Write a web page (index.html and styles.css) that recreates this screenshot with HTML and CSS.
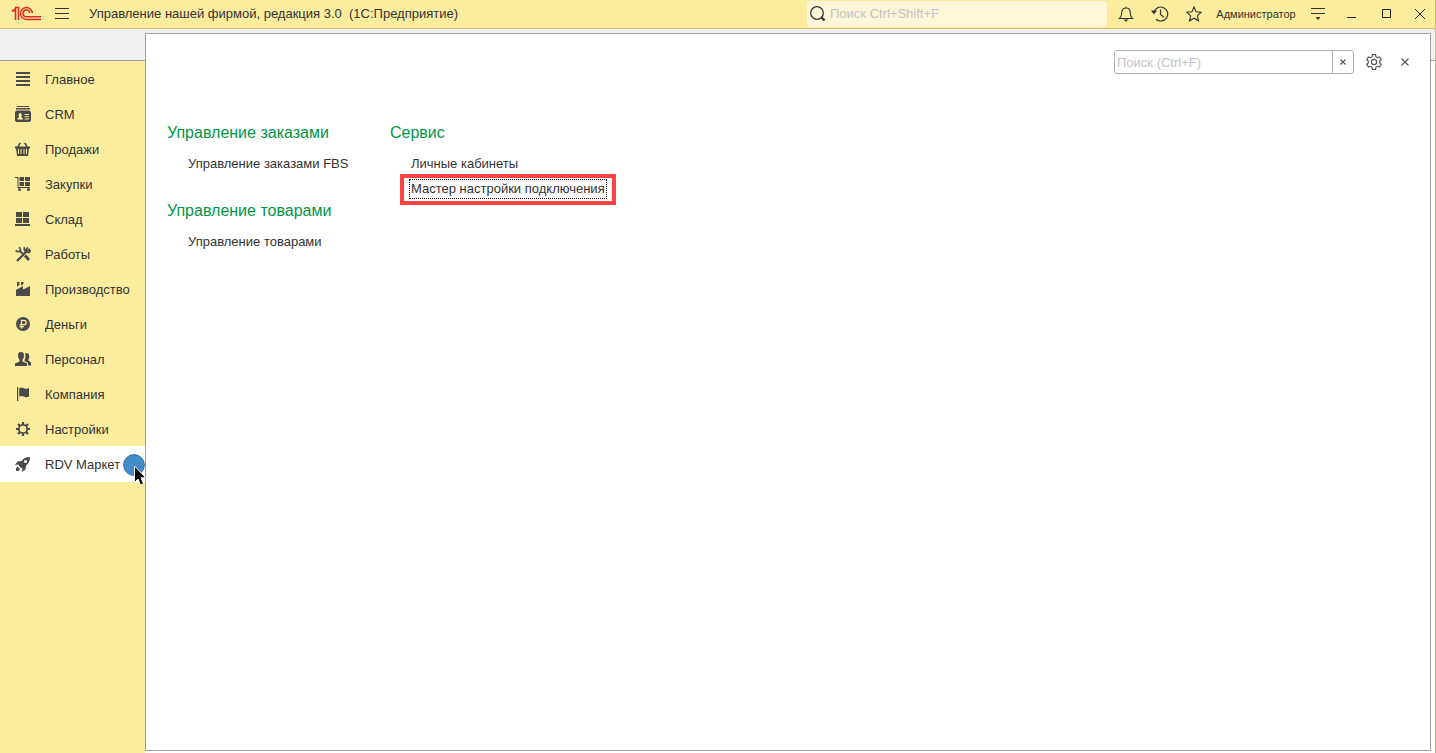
FILE: index.html
```html
<!DOCTYPE html>
<html lang="ru">
<head>
<meta charset="utf-8">
<title>Управление нашей фирмой</title>
<link rel="stylesheet" href="styles.css">
</head>
<body>
<div class="window">
  <header class="topbar">
    <svg class="logo" width="30" height="16" viewBox="0 0 30 16" fill="none" stroke="#dc2a22" stroke-width="1.500">
      <path d="M0 4.500H1.500L3.500 2.500V14M3 1.600H6.500V14M0 5H2.600"/>
      <path d="M20.300 7A5.900 5.900 0 1 0 14.500 13.400H29"/>
      <path d="M17.800 7A3.400 3.400 0 1 0 14.500 10.700H29"/>
    </svg>
    <button class="icon-btn menu-btn" aria-label="Меню">
      <svg width="14" height="12" viewBox="0 0 14 12" stroke="#333" stroke-width="1"><path d="M0 .5H14M0 5.500H14M0 10.500H14"/></svg>
    </button>
    <h1 class="title">Управление нашей фирмой, редакция 3.0  (1С:Предприятие)</h1>
    <label class="global-search">
      <svg width="16" height="16" viewBox="0 0 16 16" fill="none" stroke="#333"><circle cx="7" cy="7" r="6.300" stroke-width="1.300"/><path d="M11.500 11.500L14.500 14.500" stroke-width="2.400"/></svg>
      <input type="text" placeholder="Поиск Ctrl+Shift+F" aria-label="Поиск Ctrl+Shift+F">
    </label>
    <div class="tools">
      <button class="icon-btn" aria-label="Уведомления">
        <svg width="16" height="16" viewBox="0 0 16 16" fill="none" stroke="#333" stroke-width="1.100"><path d="M8 .5V2M1.500 12.500C3.500 10.500 3.800 9 3.800 6.500C3.800 3.500 5.500 2 8 2S12.200 3.500 12.200 6.500C12.200 9 12.500 10.500 14.500 12.500Z"/><path d="M5.500 13.500H10.500L8 15.800Z" fill="#333" stroke="none"/></svg>
      </button>
      <button class="icon-btn" aria-label="История">
        <svg width="18" height="16" viewBox="0 0 18 16" fill="none" stroke="#333" stroke-width="1.200"><path d="M3 6A7 7 0 1 1 5 13.200M9.500 3.500V8.500L13 11.200"/><path d="M0 4.500H6L3 8.500Z" fill="#333" stroke="none"/></svg>
      </button>
      <button class="icon-btn" aria-label="Избранное">
        <svg width="16" height="16" viewBox="0 0 16 16" fill="none" stroke="#333" stroke-width="1.100"><path d="M8 1L10.100 5.700L15.300 6.200L11.400 9.700L12.500 14.800L8 12.200L3.500 14.800L4.600 9.700L.7 6.200L5.900 5.700Z"/></svg>
      </button>
      <button class="user">Администратор</button>
      <button class="icon-btn" aria-label="Параметры">
        <svg width="14" height="14" viewBox="0 0 14 14" stroke="#333"><path d="M0 1.500H14M0 6.500H14"/><path d="M4.500 10H9.500L7 13Z" fill="#333" stroke="none"/></svg>
      </button>
    </div>
    <div class="controls">
      <button class="icon-btn" aria-label="Свернуть"><svg width="10" height="10" viewBox="0 0 10 10" stroke="#222"><path d="M0 8.500H9"/></svg></button>
      <button class="icon-btn" aria-label="Развернуть"><svg width="10" height="10" viewBox="0 0 10 10" fill="none" stroke="#222"><path d="M1.500 .5H9.500V8.500H1.500Z"/></svg></button>
      <button class="icon-btn" aria-label="Закрыть"><svg width="10" height="10" viewBox="0 0 10 10" stroke="#222"><path d="M0 0L10 10M10 0L0 10"/></svg></button>
    </div>
  </header>

  <div class="workspace">
    <div class="side">
      <div class="tab-strip"></div>
      <nav class="nav">
        <a class="nav-item" href="#"><svg class="ico" viewBox="0 0 16 16"><path d="M1 1H15V3H1ZM1 5H15V7H1ZM1 9H15V11H1ZM1 13H15V15H1Z"/></svg><span>Главное</span></a>
        <a class="nav-item" href="#"><svg class="ico" viewBox="0 0 16 16"><path d="M2 0H14V1H2ZM1 2H15V3.500H1Z"/><path fill-rule="evenodd" d="M1.500 4.500H14.500L16 6V14.500L14.500 16H1.500L0 14.500V6ZM2.200 13.500H8.200C8.200 11.800 6.500 11.500 6.200 11C7 10 7 7 5.200 7S3.400 10 4.200 11C3.900 11.500 2.200 11.800 2.200 13.500ZM9.500 8V9H14V8ZM9.500 10.200V11.200H14V10.200ZM9.500 12.400V13.400H14V12.400Z"/></svg><span>CRM</span></a>
        <a class="nav-item" href="#"><svg class="ico" viewBox="0 0 16 16"><path d="M4.500 1.500L6 2.500L3.500 6H2ZM10.500 1.500L9 2.500L11.500 6H13Z"/><path fill-rule="evenodd" d="M0 5.500H15V7.500H14L13 15H2L1 7.500H0ZM3 8V13H4V8ZM5.500 8V13H6.500V8ZM8.500 8V13H9.500V8ZM11 8V13H12V8Z"/></svg><span>Продажи</span></a>
        <a class="nav-item" href="#"><svg class="ico" viewBox="0 0 16 16"><path d="M0 1H3.500V11H15V12H2.500V2H0ZM4.500 1H9V5H4.500ZM10 1H15V5H10ZM4.500 6H9V10H4.500ZM10 6H15V10H10Z"/><circle cx="4.500" cy="13.500" r="1.500"/><circle cx="13.500" cy="13.500" r="1.500"/></svg><span>Закупки</span></a>
        <a class="nav-item" href="#"><svg class="ico" viewBox="0 0 16 16"><path d="M1 1H7V6H1ZM8 1H14V6H8ZM1 7H7V12H1ZM8 7H14V12H8ZM0 13H15V15H0Z"/></svg><span>Склад</span></a>
        <a class="nav-item" href="#"><svg class="ico line" viewBox="0 0 16 16"><path d="M2 15L11 6" stroke-width="2.200"/><path d="M10 9.500L14 14" stroke-width="2.800"/><path d="M5 5L8.500 8.500" stroke-width="2"/><path d="M.8 4.500C2 6.500 5.500 6 5.500 3.500C5.500 2.500 4.800 1.500 3.800 1.200M9.300 1.200C8.800 4.500 10.500 6.500 14 6.500A2 2 0 0 0 14.500 3.500L12.500 5L11 3.700L13 1.500" stroke-width="1.700"/></svg><span>Работы</span></a>
        <a class="nav-item" href="#"><svg class="ico" viewBox="0 0 16 16"><path d="M2 1H4.500V4L2 5.500ZM6 1H8.500V3L6 4.500ZM1 9L8 5V8.500L15 5V15H1Z"/></svg><span>Производство</span></a>
        <a class="nav-item" href="#"><svg class="ico" viewBox="0 0 16 16"><circle cx="8" cy="8" r="7"/><path d="M6.500 12.500V4.300H9A2.200 2.200 0 0 1 9 8.700H4.500M4.500 10.700H9" fill="none" stroke="#fbec9e" stroke-width="1.300"/></svg><span>Деньги</span></a>
        <a class="nav-item" href="#"><svg class="ico" viewBox="0 0 16 16"><path d="M6 1C8.500 1 9 2.500 9 4.500C9 6.500 8.300 8 7.500 8.800V10.500L12 12.500V15H0V12.500L4.500 10.500V8.800C3.700 8 3 6.500 3 4.500C3 2.500 3.500 1 6 1ZM10 2.500C12.500 1.500 14.500 2.500 14.300 5.500C14.200 7.500 13.500 8 13.300 9.500L16 11.500V14.500H13V12L9.500 10V9C10.500 7.500 10.800 5 10 2.500Z"/></svg><span>Персонал</span></a>
        <a class="nav-item" href="#"><svg class="ico" viewBox="0 0 16 16"><path d="M2 1H3.200V15H2ZM4.200 2C6 1 7.500 1.500 9 2.300S12.500 3 14 2V10.500C12.500 11.500 11 11.500 9.500 10.700S6 9.500 4.200 10.500Z"/></svg><span>Компания</span></a>
        <a class="nav-item" href="#"><svg class="ico line" viewBox="0 0 16 16"><circle cx="8" cy="8" r="4.200" stroke-width="1.800"/><path d="M8 1V3.500M8 12.500V15M1 8H3.500M12.500 8H15M3 3L5 5M11 11L13 13M13 3L11 5M5 11L3 13" stroke-width="2.200"/></svg><span>Настройки</span></a>
        <a class="nav-item active" href="#"><svg class="ico" viewBox="0 0 16 16"><path fill-rule="evenodd" d="M15 1C11 1 8.500 2.500 6.500 5L2.500 5.500L0 9L3.500 8.500L4 10L6 12L7.500 12.500L7 16L10.500 13.500L11 9.500C13.500 7.500 15 5 15 1ZM10.500 4A1.500 1.500 0 1 1 10.500 7A1.500 1.500 0 1 1 10.500 4Z"/><path d="M2.500 10.500L5 13L3.500 15H1L1 12.500Z"/></svg><span>RDV Маркет</span>
          <svg class="pointer" width="24" height="32" viewBox="0 0 24 32"><circle cx="12" cy="11" r="10.400" fill="#428bca" stroke="#336f9f"/><path d="M12.500 12V28.500L16 25L18.500 31L21.500 29.700L19 23.800H23.800Z" fill="#000" stroke="#fff"/></svg>
        </a>
      </nav>
    </div>

    <main class="panel">
      <form class="panel-tools">
        <div class="panel-search">
          <input type="text" placeholder="Поиск (Ctrl+F)" aria-label="Поиск (Ctrl+F)">
          <button type="button" class="clear" aria-label="Очистить"><svg width="6" height="6" viewBox="0 0 6 6" stroke="#555" stroke-width="1.100"><path d="M.5 .5L5.500 5.500M5.500 .5L.5 5.500"/></svg></button>
        </div>
        <button type="button" class="icon-btn gear" aria-label="Настройка">
          <svg width="16" height="16" viewBox="0 0 16 16" fill="none" stroke="#555" stroke-width="1.200"><circle cx="8" cy="8" r="2.600"/><path d="M6.500 .7H9.500L10 2.800L11.500 3.700L13.600 3L15.200 5.600L13.700 7.100V8.900L15.200 10.400L13.600 13L11.500 12.300L10 13.200L9.500 15.300H6.500L6 13.200L4.500 12.300L2.400 13L.8 10.400L2.300 8.900V7.100L.8 5.600L2.400 3L4.500 3.700L6 2.800Z"/></svg>
        </button>
        <button type="button" class="icon-btn close" aria-label="Закрыть панель"><svg width="8" height="8" viewBox="0 0 8 8" stroke="#555" stroke-width="1.100"><path d="M.5 .5L7.500 7.500M7.500 .5L.5 7.500"/></svg></button>
      </form>
      <div class="groups">
        <div class="column">
          <section class="group">
            <h2>Управление заказами</h2>
            <a href="#">Управление заказами FBS</a>
          </section>
          <section class="group">
            <h2>Управление товарами</h2>
            <a href="#">Управление товарами</a>
          </section>
        </div>
        <div class="column">
          <section class="group">
            <h2>Сервис</h2>
            <a href="#">Личные кабинеты</a>
            <a href="#" class="focused">Мастер настройки подключения</a>
          </section>
        </div>
      </div>
    </main>
    <div class="gutter"><div class="tab-strip"></div></div>
  </div>
</div>
</body>
</html>
```
FILE: styles.css
```css
* { box-sizing: border-box; }

body {
  margin: 0;
  font: 13px/16px "Liberation Sans", Arial, sans-serif;
  color: #333;
  background: #fff;
}

a { color: inherit; text-decoration: none; }
svg { display: block; flex: none; }
button, input { font: inherit; color: inherit; }
button { margin: 0; padding: 0; border: 0; background: none; }
input { min-width: 0; padding: 0; border: 0; outline: 0; background: none; }
input::placeholder { color: #c4c2c8; opacity: 1; }

.window {
  display: flex;
  flex-direction: column;
  height: 100vh;
  border-right: 1px solid #cdbc6c;
}

.topbar {
  display: flex;
  align-items: center;
  flex: none;
  height: 29px;
  padding: 0 10px 1px 12px;
  background: #fbec9e;
  border-bottom: 1px solid #cdbc6c;
}

.icon-btn { display: flex; align-items: center; justify-content: center; }
.menu-btn { margin: 0 20px 0 13px; }

.title {
  flex: 1;
  margin: 0;
  font-size: 13px;
  font-weight: normal;
  white-space: pre;
}

.global-search {
  display: flex;
  align-items: center;
  gap: 4px;
  width: 300px;
  height: 26px;
  padding: 0 3px;
  border-radius: 3px;
  background: #fef6d6;
}
.global-search input { flex: 1; }

.tools { display: flex; align-items: center; gap: 17px; margin-left: 11px; }
.user { min-width: 82px; margin: 0 -3px 0 -4px; font-size: 11px; }
.controls { display: flex; align-items: center; gap: 24px; margin-left: 22px; }

.workspace { display: flex; flex: 1; min-height: 0; background: #fff; }

.side { display: flex; flex-direction: column; flex: none; width: 145px; }
.gutter { flex: none; width: 4px; }
.tab-strip {
  flex: none;
  height: 32px;
  background: #f0f0f0;
  border-bottom: 1px solid #a0a0a0;
}

.nav { flex: 1; background: #fbec9e; }
.nav-item {
  position: relative;
  display: flex;
  align-items: center;
  gap: 14px;
  height: 35px;
  padding: 1px 0 0 15px;
  white-space: nowrap;
}
.nav-item span { padding-top: 2px; }
.nav-item.active { background: #fff; box-shadow: 0 1px #fff; }
.ico { width: 16px; height: 16px; fill: #4a4a4a; }
.ico.line { fill: none; stroke: #4a4a4a; }
.pointer { position: absolute; left: 122px; top: 8px; z-index: 2; }

.panel {
  flex: 1;
  margin: 4px 0 2px;
  border: 1px solid #a0a0a0;
  background: #fff;
  box-shadow: 0 -4px #f0f0f0;
}

.panel-tools {
  display: flex;
  align-items: center;
  justify-content: flex-end;
  padding: 16px 20px 0 0;
}
.panel-search {
  display: flex;
  width: 240px;
  height: 24px;
  border: 1px solid #b0b0b0;
  border-radius: 3px;
}
.panel-search input { flex: 1; padding: 2px 0 0 2px; }
.clear {
  display: flex;
  align-items: center;
  justify-content: center;
  width: 21px;
  border-left: 1px solid #b0b0b0;
}
.gear { margin: 0 19px 0 12px; }
.close { margin-right: 1px; }

.groups { display: flex; gap: 43px; padding: 49px 21px; }
.column { display: flex; flex-direction: column; gap: 24px; width: 180px; white-space: nowrap; }
.group { display: flex; flex-direction: column; align-items: flex-start; }
.group h2 {
  margin: 0 0 8px;
  font-size: 16px;
  line-height: 20px;
  font-weight: normal;
  color: #009646;
}
.group a { height: 26px; margin-left: 21px; padding-top: 2px; line-height: 22px; }
.group .focused {
  position: relative;
  height: 20px;
  margin: 2px 0 0 19px;
  padding: 0 1px;
  line-height: 18px;
  border: 1px dotted #000;
}
/* highlight frame around the focused command */
.focused::after {
  content: "";
  position: absolute;
  inset: -6px -10px -7px;
  border: 4px solid #ff4242;
}
```
